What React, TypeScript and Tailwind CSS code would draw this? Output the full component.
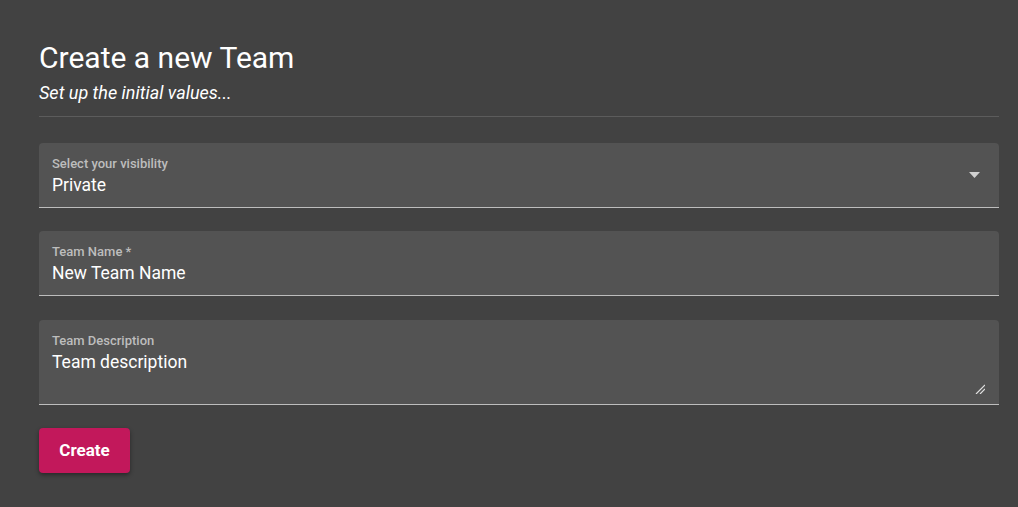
import React from "react";

function Field({ label, value, tall, select, className = "" }: { label: string; value: string; tall?: boolean; select?: boolean; className?: string }) {
  return (
    <div className={`relative bg-[#535353] rounded-t-[4px] border-b border-[#bdbdbd] px-[13px] pt-[14px] ${tall ? "h-[85px]" : "h-[65px]"} ${className}`}>
      <div className="text-[13px] leading-[14px] text-[#bdbdbd] font-medium">{label}</div>
      <div className="text-[17.5px] leading-[24px] text-white mt-[2px]">{value}</div>
      {select && (
        <svg className="absolute right-[19px] top-[29px]" width="11" height="6" viewBox="0 0 11 6">
          <path d="M0 0 L11 0 L5.5 6 Z" fill="#d0d0d0" />
        </svg>
      )}
      {tall && (
        <svg className="absolute right-[14px] bottom-[10px]" width="10" height="10" viewBox="0 0 10 10">
          <path d="M1 10 L10 1 M5 10 L10 5" stroke="#e0e0e0" strokeWidth="1.2" />
        </svg>
      )}
    </div>
  );
}

export default function App() {
  return (
    <div className="min-h-[507px] w-full bg-[#424242] pl-[39px] pr-[19px] pt-[40px] pb-[34px]" style={{ fontFamily: "Roboto, 'Noto Sans', sans-serif" }}>
      <h1 className="text-[30px] leading-[36px] text-white">Create a new Team</h1>
      <p className="text-[18px] leading-[24px] italic text-white mt-[5px]">Set up the initial values...</p>
      <div className="h-px bg-[#5c5c5c] mt-[11px]" />
      <div className="mt-[26px] flex flex-col gap-[23px]">
        <Field label="Select your visibility" value="Private" select />
        <Field label="Team Name *" value="New Team Name" />
        <Field label="Team Description" value="Team description" tall className="mt-[1px]" />
      </div>
      <button className="mt-[23px] h-[45px] w-[91px] rounded-[4px] bg-[#c2185b] text-white font-bold text-[17px] shadow-[0_2px_4px_rgba(0,0,0,0.4)]">
        Create
      </button>
    </div>
  );
}
